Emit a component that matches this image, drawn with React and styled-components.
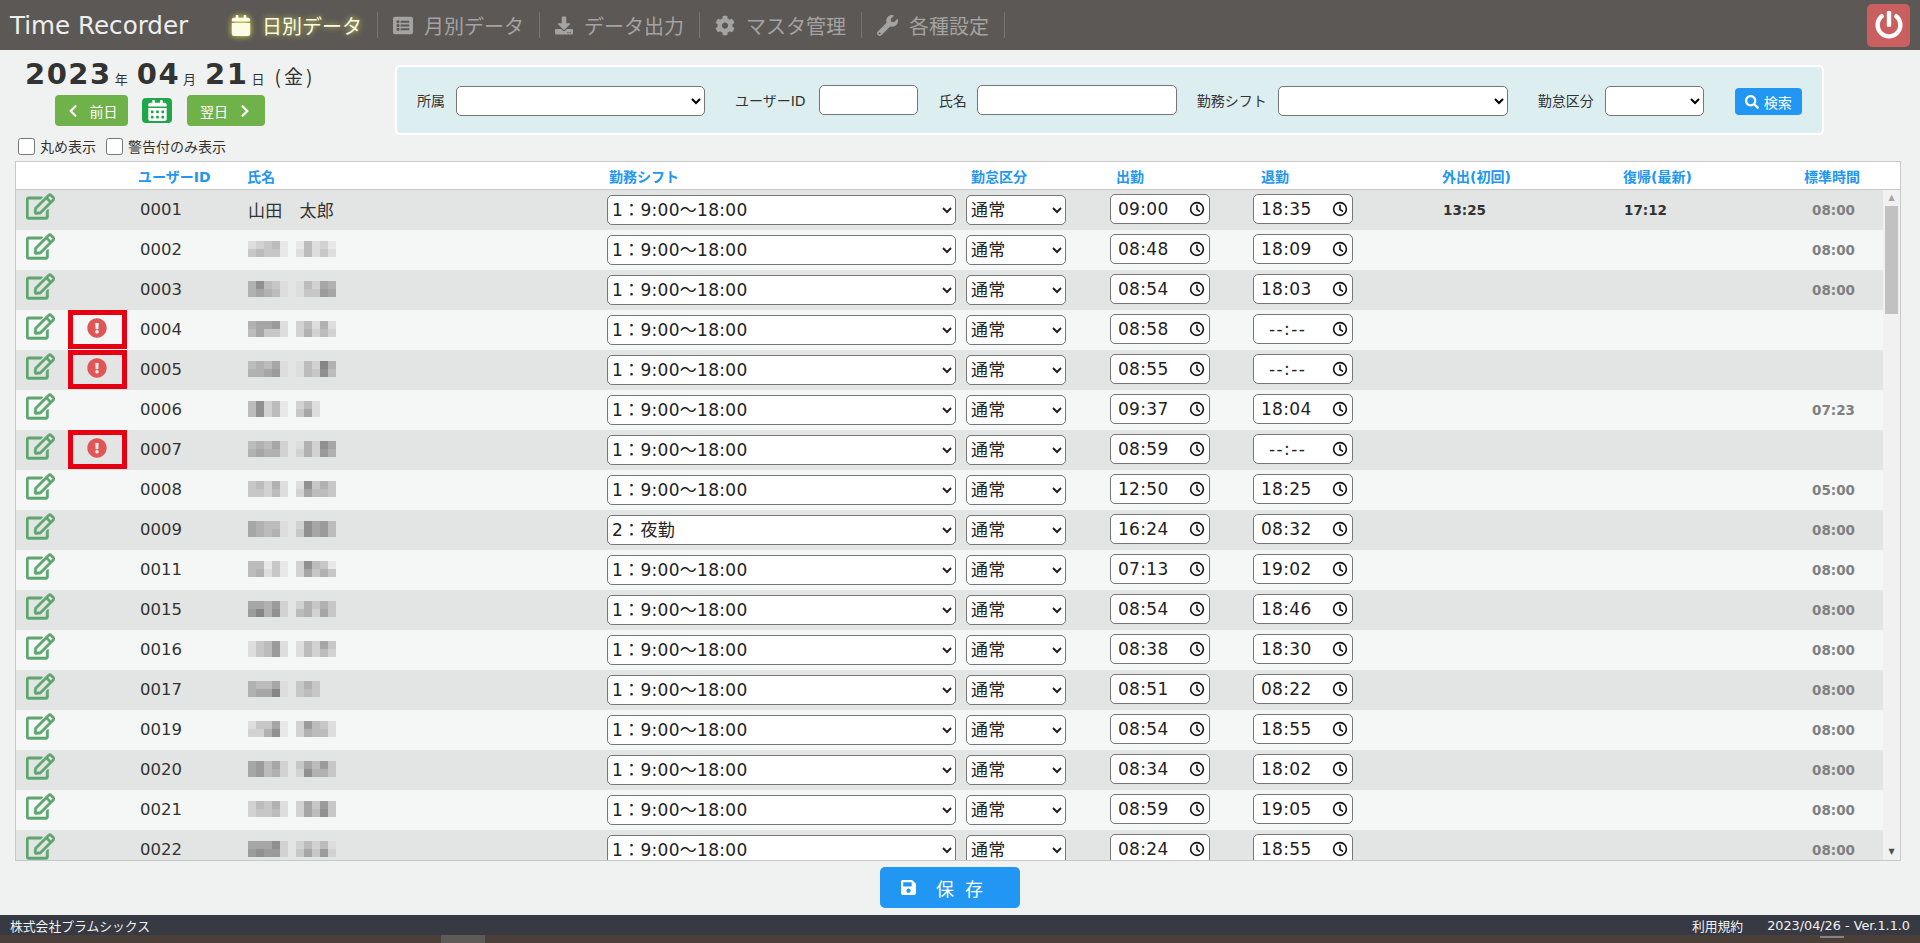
import styled, { createGlobalStyle } from "styled-components";
import {
  FaCalendar,
  FaCalendarAlt,
  FaChevronLeft,
  FaChevronRight,
  FaCog,
  FaDownload,
  FaExclamationCircle,
  FaListAlt,
  FaPowerOff,
  FaRegEdit,
  FaSave,
  FaSearch,
  FaWrench,
} from "react-icons/fa";

const FONT = `"DejaVu Sans", "Noto Sans CJK JP", sans-serif`;
const SHIFT1 = "1：9:00～18:00";
const SHIFT2 = "2：夜勤";

const GlobalStyle = createGlobalStyle`
  html, body {
    margin: 0;
    padding: 0;
    background: #f0f2f2;
  }
  body {
    font-family: ${FONT};
    color: #333;
    overflow: hidden;
  }
`;

const Page = styled.div`
  width: 1920px;
  height: 943px;
  display: flex;
  flex-direction: column;
  overflow: hidden;
`;

const Header = styled.header`
  height: 50px;
  flex: none;
  background: #5b5856;
  display: flex;
  align-items: center;
  padding: 0 10px;
  box-sizing: border-box;
`;

const Title = styled.div`
  width: 178px;
  font-size: 24.6px;
  color: #eee;
  white-space: nowrap;
`;

const Nav = styled.nav`
  display: flex;
  margin-left: 28px;
`;

const NavItem = styled.a`
  display: flex;
  align-items: center;
  height: 26px;
  padding: 0 15px;
  gap: 11px;
  border-right: 1px solid #777472;
  font-size: 20px;
  white-space: nowrap;
  color: ${(p) => (p.$active ? "#fbfbe6" : "#a5a3a1")};
  text-shadow: ${(p) => (p.$active ? "0 0 6px #d8d850" : "none")};

  svg {
    width: ${(p) => p.$icon}px;
    height: 21px;
    flex: none;
    filter: ${(p) => (p.$active ? "drop-shadow(0 0 3px #e4e040)" : "none")};
  }
`;

const PowerButton = styled.button`
  margin-left: auto;
  margin-right: 0;
  width: 43px;
  height: 43px;
  border: none;
  border-radius: 5px;
  background: #c95f5f;
  color: #fff;
  display: flex;
  align-items: center;
  justify-content: center;
  padding: 0;
`;

const TopArea = styled.div`
  height: 111px;
  flex: none;
  display: flex;
`;

const DateBlock = styled.div`
  width: 395px;
  flex: none;
`;

const DateLine = styled.div`
  height: 45px;
  padding: 4px 0 0 25px;
  box-sizing: border-box;
  white-space: nowrap;
  line-height: 40px;
`;

const DateNum = styled.span`
  font-size: 29px;
  font-weight: bold;
  letter-spacing: 1.5px;
`;

const DateUnit = styled.span`
  font-size: 13px;
  margin: 0 9px 0 3px;
  font-family: "Noto Sans CJK JP", sans-serif;
`;

const Weekday = styled.span`
  font-size: 19px;
  margin-left: 1px;
  letter-spacing: 3px;
  font-family: "Noto Sans CJK JP", sans-serif;
`;

const DayButtons = styled.div`
  display: flex;
  align-items: center;
  height: 31px;
  padding-left: 55px;
`;

const DayButton = styled.button`
  width: ${(p) => p.$w}px;
  height: 31px;
  border: none;
  border-radius: 4px;
  background: #70b24a;
  color: #fff;
  font-family: ${FONT};
  font-size: 14px;
  display: flex;
  align-items: center;
  justify-content: center;
  gap: 10px;
  padding: 0;
`;

const CalendarButton = styled.button`
  width: 30px;
  height: 25px;
  margin: 0 15px 0 14px;
  border: none;
  border-radius: 4px;
  background: #1fa64a;
  color: #fff;
  display: flex;
  align-items: center;
  justify-content: center;
  padding: 0;
`;

const CheckRow = styled.div`
  display: flex;
  align-items: center;
  height: 18px;
  margin-top: 11px;
  padding-left: 18px;
  gap: 10px;
`;

const CheckLabel = styled.label`
  display: flex;
  align-items: center;
  gap: 5px;
  font-size: 14px;
  white-space: nowrap;
`;

const CheckBox = styled.input`
  width: 17px;
  height: 17px;
  margin: 0;
`;

const SearchPanel = styled.div`
  width: 1429px;
  height: 70px;
  margin-top: 15px;
  box-sizing: border-box;
  border: 2px solid #fff;
  border-radius: 5px;
  background: #ddeef1;
  display: flex;
  align-items: center;
  padding-left: 20px;
`;

const FilterLabel = styled.span`
  font-size: 14px;
  margin-right: ${(p) => p.$gap || 11}px;
  white-space: nowrap;
  font-family: ${FONT};
`;

const FilterSelect = styled.select`
  width: ${(p) => p.$w}px;
  height: 30px;
  margin: 2px ${(p) => p.$after}px 0 0;
  border: 1px solid #767676;
  border-radius: 5px;
  background: #fff;
`;

const FilterInput = styled.input`
  width: ${(p) => p.$w}px;
  height: 30px;
  margin-right: ${(p) => p.$after}px;
  box-sizing: border-box;
  border: 1px solid #767676;
  border-radius: 5px;
  background: #fff;
`;

const SearchButton = styled.button`
  width: 67px;
  height: 27px;
  margin-top: 3px;
  border: none;
  border-radius: 4px;
  background: #2196f3;
  color: #fff;
  font-family: ${FONT};
  font-size: 14px;
  display: flex;
  align-items: center;
  justify-content: center;
  gap: 5px;
  padding: 0;
`;

const TableBox = styled.div`
  flex: none;
  width: 1886px;
  height: 700px;
  margin-left: 15px;
  box-sizing: border-box;
  border: 1px solid #c8c8c8;
  background: #fff;
  display: flex;
  flex-direction: column;
`;

const HeadRow = styled.div`
  flex: none;
  height: 28px;
  box-sizing: border-box;
  border-bottom: 1px solid #c8c8c8;
  display: grid;
  grid-template-columns: 122px 109px 362px 362px 145px 145px 181px 181px 181px 96px;
  align-items: center;
  font-size: 14px;
  font-weight: bold;
  color: #2196f3;
  white-space: nowrap;
`;

const TableBody = styled.div`
  flex: 1;
  min-height: 0;
  display: flex;
`;

const RowsViewport = styled.div`
  flex: 1;
  min-width: 0;
  overflow: hidden;
`;

const Row = styled.div`
  height: 40px;
  display: grid;
  grid-template-columns: 52px 59px 121px 359px 359px 144px 143px 189px 181px 189px 71px;
  align-items: center;
  background: ${(p) => (p.$odd ? "#e3e5e5" : "#f5f7f7")};
  font-size: 16.5px;
`;

const EditCell = styled.div`
  align-self: start;
  height: 40px;
  padding: 2px 0 0 10px;
  box-sizing: border-box;
  color: #5ea56f;

  svg {
    stroke: currentColor;
    stroke-width: 10;
  }
`;

const AlertCell = styled.div`
  align-self: start;
  width: 59px;
  height: 39px;
  box-sizing: border-box;
  border: 5px solid #e60012;
  display: flex;
  justify-content: center;
  padding: 3px 2px 0 0;
  color: #df5656;
`;

const IdCell = styled.div`
  padding-left: 13px;
  padding-bottom: 2px;
`;

const NameCell = styled.div`
  font-size: 17px;
  letter-spacing: 0.2px;
  display: flex;
  gap: 8px;
  padding-bottom: 2px;
`;

const Mosaic = styled.span`
  display: grid;
  grid-template-columns: repeat(${(p) => p.$cols}, 8px);
  grid-auto-rows: 8px;
`;

const MosaicCell = styled.i`
  background: rgb(${(p) => 232 - p.$d * 11}, ${(p) => 232 - p.$d * 11}, ${(p) => 233 - p.$d * 11});
`;

const ShiftSelect = styled.select`
  width: ${(p) => p.$w}px;
  height: 30px;
  border: 1px solid #767676;
  border-radius: 5px;
  background: #fff;
  color: #222;
  font-family: ${FONT};
  font-size: 17px;
  letter-spacing: 0.3px;
`;

const TimeBox = styled.label`
  width: 100px;
  height: 30px;
  margin-bottom: 2px;
  box-sizing: border-box;
  border: 1px solid #767676;
  border-radius: 5px;
  background: #fff;
  display: flex;
  align-items: center;
  padding-right: 4px;
`;

const TimeInput = styled.input`
  flex: 1;
  min-width: 0;
  border: none;
  outline: none;
  background: transparent;
  padding: 0 0 0 ${(p) => (p.$empty ? 15 : 7)}px;
  color: #222;
  font-family: ${FONT};
  font-size: 17px;
  letter-spacing: ${(p) => (p.$empty ? 1.4 : 0.3)}px;
`;

const ClockIcon = styled.svg`
  width: 16px;
  height: 16px;
  flex: none;
`;

const StampCell = styled.div`
  padding-left: 1px;
  font-size: 13.5px;
  font-weight: bold;
  color: #333;
`;

const StdCell = styled.div`
  font-size: 13.5px;
  font-weight: bold;
  color: #808080;
`;

const ScrollRail = styled.div`
  flex: none;
  width: 17px;
  background: #f1f1f1;
  display: flex;
  flex-direction: column;
  align-items: center;
`;

const ScrollArrow = styled.div`
  flex: none;
  height: 16px;
  display: flex;
  align-items: center;
  justify-content: center;
  font-size: 8px;
  line-height: 1;
  color: ${(p) => (p.$dim ? "#a3a3a3" : "#505050")};
`;

const ScrollTrack = styled.div`
  flex: 1;
  width: 100%;
`;

const ScrollThumb = styled.div`
  width: 13px;
  height: 108px;
  margin: 0 auto;
  background: #c1c1c1;
`;

const SaveArea = styled.div`
  flex: none;
  height: 54px;
  padding-top: 6px;
  box-sizing: border-box;
  display: flex;
  justify-content: center;
  width: 1900px;
`;

const SaveButton = styled.button`
  width: 140px;
  height: 41px;
  border: none;
  border-radius: 5px;
  background: #2196f3;
  color: #fff;
  font-family: ${FONT};
  font-size: 18px;
  letter-spacing: 11px;
  display: flex;
  align-items: center;
  gap: 19px;
  padding: 0 0 0 20px;
  white-space: nowrap;
`;

const Footer = styled.footer`
  flex: none;
  height: 20px;
  background: #373a42;
  color: #f2f2f2;
  display: flex;
  align-items: center;
  padding: 0 10px;
  font-size: 12.8px;
`;

const FooterLink = styled.span`
  margin-left: auto;
  margin-right: 24px;
`;

const Strip = styled.div`
  flex: 1;
  background: #4a3f39;
  display: flex;
`;

const StripBlock = styled.div`
  width: 44px;
  margin-left: 441px;
  background: #5f5a57;
`;

const StripSpot = styled.div`
  width: 24px;
  height: 2px;
  margin: 1px 0 0 1335px;
  background: #8a8480;
`;

const NAV_ITEMS = [
  { label: "日別データ", Icon: FaCalendar, w: 20, active: true },
  { label: "月別データ", Icon: FaListAlt, w: 20 },
  { label: "データ出力", Icon: FaDownload, w: 18 },
  { label: "マスタ管理", Icon: FaCog, w: 20 },
  { label: "各種設定", Icon: FaWrench, w: 21 },
];

const rows = [
  { id: "0001", real: "山田　太郎", in: "09:00", out: "18:35", go: "13:25", back: "17:12", std: "08:00" },
  { id: "0002", m: ["12340/34330", "04120/14131"], in: "08:48", out: "18:09", std: "08:00" },
  { id: "0003", m: ["58431/56541", "14265/13376"], in: "08:54", out: "18:03", std: "08:00" },
  { id: "0004", m: ["56671/46331", "24151/25242"], in: "08:58", alert: true },
  { id: "0005", m: ["45461/55671", "14295/14384"], in: "08:55", alert: true },
  { id: "0006", m: ["48240/48240", "241/361"], in: "09:37", out: "18:04", std: "07:23" },
  { id: "0007", m: ["45462/56552", "15286/25275"], in: "08:59", alert: true },
  { id: "0008", m: ["34251/33241", "18353/26443"], in: "12:50", out: "18:25", std: "05:00" },
  { id: "0009", m: ["65441/65451", "28674/38674"], shift: SHIFT2, in: "16:24", out: "08:32", std: "08:00" },
  { id: "0011", m: ["44030/45130", "28430/26353"], in: "07:13", out: "19:02", std: "08:00" },
  { id: "0015", m: ["66572/79582", "25353/45263"], in: "08:54", out: "18:46", std: "08:00" },
  { id: "0016", m: ["13471/13471", "14263/14242"], in: "08:38", out: "18:30", std: "08:00" },
  { id: "0017", m: ["54461/56691", "353/343"], in: "08:51", out: "08:22", std: "08:00" },
  { id: "0019", m: ["13360/22580", "27431/25441"], in: "08:54", out: "18:55", std: "08:00" },
  { id: "0020", m: ["67462/67452", "36473/28553"], in: "08:34", out: "18:02", std: "08:00" },
  { id: "0021", m: ["24351/23341", "26373/26483"], in: "08:59", out: "19:05", std: "08:00" },
  { id: "0022", m: ["66682/78772", "24241/36372"], in: "08:24", out: "18:55", std: "08:00" },
];

function NameMosaic({ code }) {
  const [top, bottom] = code.split("/");
  return (
    <Mosaic $cols={top.length}>
      {(top + bottom).split("").map((d, i) => (
        <MosaicCell key={i} $d={Number(d)} />
      ))}
    </Mosaic>
  );
}

function TimeField({ value }) {
  return (
    <TimeBox>
      <TimeInput type="text" readOnly value={value || "--:--"} $empty={!value} />
      <ClockIcon viewBox="0 0 16 16" fill="none" stroke="#111" strokeWidth="1.6">
        <circle cx="8" cy="8" r="6.4" />
        <path d="M8 3.8v4.6l3 2.2" />
      </ClockIcon>
    </TimeBox>
  );
}

export default function App() {
  return (
    <Page>
      <GlobalStyle />
      <Header>
        <Title>Time Recorder</Title>
        <Nav>
          {NAV_ITEMS.map(({ label, Icon, w, active }) => (
            <NavItem key={label} $icon={w} $active={active}>
              <Icon />
              {label}
            </NavItem>
          ))}
        </Nav>
        <PowerButton>
          <FaPowerOff size={28} />
        </PowerButton>
      </Header>

      <TopArea>
        <DateBlock>
          <DateLine>
            <DateNum>2023</DateNum>
            <DateUnit>年</DateUnit>
            <DateNum>04</DateNum>
            <DateUnit>月</DateUnit>
            <DateNum>21</DateNum>
            <DateUnit>日</DateUnit>
            <Weekday>(金)</Weekday>
          </DateLine>
          <DayButtons>
            <DayButton $w={73}>
              <FaChevronLeft size={14} />
              前日
            </DayButton>
            <CalendarButton>
              <FaCalendarAlt size={21} />
            </CalendarButton>
            <DayButton $w={78}>
              翌日
              <FaChevronRight size={14} />
            </DayButton>
          </DayButtons>
          <CheckRow>
            <CheckLabel>
              <CheckBox type="checkbox" />
              丸め表示
            </CheckLabel>
            <CheckLabel>
              <CheckBox type="checkbox" />
              警告付のみ表示
            </CheckLabel>
          </CheckRow>
        </DateBlock>

        <SearchPanel>
          <FilterLabel>所属</FilterLabel>
          <FilterSelect $w={249} $after={30}>
            <option></option>
          </FilterSelect>
          <FilterLabel $gap={13}>ユーザーID</FilterLabel>
          <FilterInput $w={99} $after={21} />
          <FilterLabel $gap={10}>氏名</FilterLabel>
          <FilterInput $w={200} $after={20} />
          <FilterLabel>勤務シフト</FilterLabel>
          <FilterSelect $w={230} $after={30}>
            <option></option>
          </FilterSelect>
          <FilterLabel>勤怠区分</FilterLabel>
          <FilterSelect $w={99} $after={31}>
            <option></option>
          </FilterSelect>
          <SearchButton>
            <FaSearch size={14} />
            検索
          </SearchButton>
        </SearchPanel>
      </TopArea>

      <TableBox>
        <HeadRow>
          <span />
          <span>ユーザーID</span>
          <span>氏名</span>
          <span>勤務シフト</span>
          <span>勤怠区分</span>
          <span>出勤</span>
          <span>退勤</span>
          <span>外出(初回)</span>
          <span>復帰(最新)</span>
          <span>標準時間</span>
        </HeadRow>
        <TableBody>
          <RowsViewport>
            {rows.map((row, i) => (
              <Row key={row.id} $odd={i % 2 === 0}>
                <EditCell>
                  <FaRegEdit size={29} />
                </EditCell>
                {row.alert ? (
                  <AlertCell>
                    <FaExclamationCircle size={20} />
                  </AlertCell>
                ) : (
                  <span />
                )}
                <IdCell>{row.id}</IdCell>
                <NameCell>
                  {row.real
                    ? row.real
                    : row.m.map((code, k) => <NameMosaic key={k} code={code} />)}
                </NameCell>
                <ShiftSelect $w={349} defaultValue={row.shift || SHIFT1}>
                  <option>{SHIFT1}</option>
                  <option>{SHIFT2}</option>
                </ShiftSelect>
                <ShiftSelect $w={100} defaultValue="通常">
                  <option>通常</option>
                </ShiftSelect>
                <TimeField value={row.in} />
                <TimeField value={row.out} />
                <StampCell>{row.go}</StampCell>
                <StampCell>{row.back}</StampCell>
                <StdCell>{row.std}</StdCell>
              </Row>
            ))}
          </RowsViewport>
          <ScrollRail>
            <ScrollArrow $dim>▲</ScrollArrow>
            <ScrollTrack>
              <ScrollThumb />
            </ScrollTrack>
            <ScrollArrow>▼</ScrollArrow>
          </ScrollRail>
        </TableBody>
      </TableBox>

      <SaveArea>
        <SaveButton>
          <FaSave size={17} />
          保存
        </SaveButton>
      </SaveArea>

      <Footer>
        <span>株式会社プラムシックス</span>
        <FooterLink>利用規約</FooterLink>
        <span>2023/04/26 - Ver.1.1.0</span>
      </Footer>
      <Strip>
        <StripBlock />
        <StripSpot />
      </Strip>
    </Page>
  );
}
